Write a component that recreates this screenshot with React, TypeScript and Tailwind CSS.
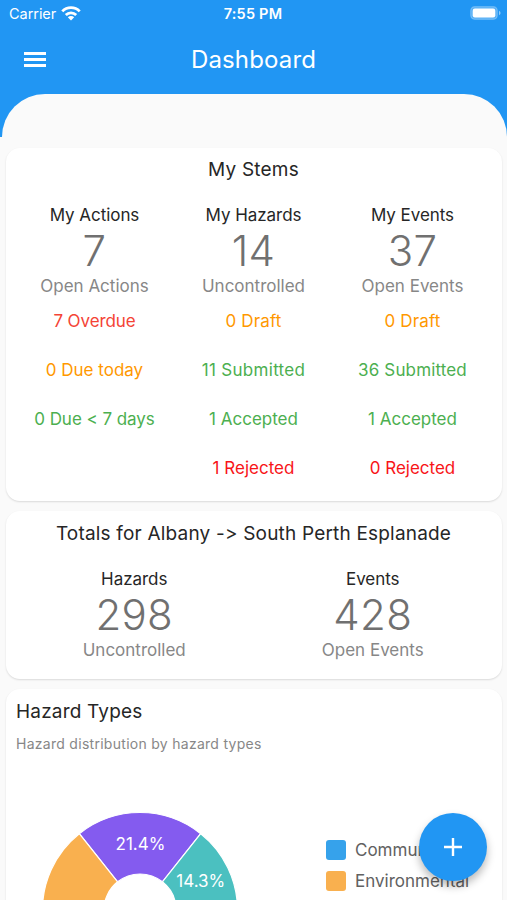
import type { ReactNode } from "react";
import clsx from "clsx";

type Line = { text: string; className: string };
type Stat = { title: string; value: number; caption: string; lines?: Line[] };

const stems: Stat[] = [
    {
        title: "My Actions",
        value: 7,
        caption: "Open Actions",
        lines: [
            { text: "7 Overdue", className: "text-[#f44336] tracking-[-0.1px]" },
            { text: "0 Due today", className: "text-[#ff9800]" },
            { text: "0 Due < 7 days", className: "text-[#4caf50] tracking-[-0.05px]" },
        ],
    },
    {
        title: "My Hazards",
        value: 14,
        caption: "Uncontrolled",
        lines: [
            { text: "0 Draft", className: "text-[#ff9800] tracking-[0.15px]" },
            { text: "11 Submitted", className: "text-[#4caf50] tracking-[0.3px]" },
            { text: "1 Accepted", className: "text-[#4caf50]" },
            { text: "1 Rejected", className: "text-[#f81418]" },
        ],
    },
    {
        title: "My Events",
        value: 37,
        caption: "Open Events",
        lines: [
            { text: "0 Draft", className: "text-[#ff9800] tracking-[0.15px]" },
            { text: "36 Submitted", className: "text-[#4caf50] tracking-[0.15px]" },
            { text: "1 Accepted", className: "text-[#4caf50]" },
            { text: "0 Rejected", className: "text-[#f81418]" },
        ],
    },
];

const totals: Stat[] = [
    { title: "Hazards", value: 298, caption: "Uncontrolled" },
    { title: "Events", value: 428, caption: "Open Events" },
];

const legend = [
    { label: "Community", color: "bg-[#36a2eb]" },
    { label: "Environmental", color: "bg-[#f9b04f]" },
];

// Angles are in degrees, clockwise from the top
const slices = [
    { from: -38.5, to: 38.5, color: "#845bef", label: "21.4%" },
    { from: 38.5, to: 90, color: "#4bc0c0", label: "14.3%" },
    { from: 90, to: 205, color: "#36a2eb" },
    { from: 205, to: 321.5, color: "#f9b04f" },
];

const OUTER = 97.5;
const INNER = 36;

function point(angle: number, radius: number) {
    const rad = (angle * Math.PI) / 180;
    return [100 + radius * Math.sin(rad), 100 - radius * Math.cos(rad)];
}

function slicePath(from: number, to: number) {
    const large = to - from > 180 ? 1 : 0;
    const [x1, y1] = point(from, OUTER);
    const [x2, y2] = point(to, OUTER);
    const [x3, y3] = point(to, INNER);
    const [x4, y4] = point(from, INNER);
    return `M${x1} ${y1} A${OUTER} ${OUTER} 0 ${large} 1 ${x2} ${y2} L${x3} ${y3} A${INNER} ${INNER} 0 ${large} 0 ${x4} ${y4} Z`;
}

function DonutChart() {
    return (
        <svg viewBox="0 0 200 200" className="h-[200px] w-[200px] shrink-0">
            {slices.map((slice) => (
                <path key={slice.from} d={slicePath(slice.from, slice.to)} fill={slice.color} stroke="#fff" strokeWidth="1.2" />
            ))}
            {slices.map((slice) => {
                if (!slice.label) return null;
                const [x, y] = point((slice.from + slice.to) / 2, 67);
                return (
                    <text key={slice.from} x={x + 0.5} y={y + 6.5} textAnchor="middle" fill="#fff" fontSize="17">
                        {slice.label}
                    </text>
                );
            })}
        </svg>
    );
}

function StatusBar() {
    return (
        <div className="grid h-[27px] grid-cols-3 items-center pl-[9px] pr-[6px] text-white">
            <div className="flex items-center gap-[5px]">
                <span className="text-[14.5px] tracking-[-0.05px]">Carrier</span>
                <svg viewBox="0 0 20 15" className="-mt-px h-[15px] w-[20px]" fill="none" stroke="#fff" strokeWidth="2.8">
                    <path d="M1.3 5.4a12 12 0 0 1 17.4 0" />
                    <path d="M4.8 9a7.4 7.4 0 0 1 10.4 0" />
                    <path d="M10 14.6 6.8 11.3a4.5 4.5 0 0 1 6.4 0Z" fill="#fff" stroke="none" />
                </svg>
            </div>
            <div className="pr-1 text-center text-[14.5px] font-semibold tracking-[0.2px]">7:55 PM</div>
            <svg viewBox="0 0 31 14" className="-mt-px h-[14px] w-[31px] justify-self-end">
                <rect x="0.7" y="0.7" width="26.6" height="12.6" rx="4" fill="#fff" fillOpacity="0.25" stroke="#fff" strokeOpacity="0.25" strokeWidth="1.2" />
                <rect x="2.7" y="2.6" width="22.6" height="8.8" rx="2.2" fill="#fff" />
                <path d="M29 4.8q1.6 1 1.6 2.2t-1.6 2.2Z" fill="#fff" fillOpacity="0.5" />
            </svg>
        </div>
    );
}

function StatColumn({ stat }: { stat: Stat }) {
    return (
        <div className="flex flex-1 flex-col items-center whitespace-nowrap text-[17px] leading-[21px]">
            <div className="tracking-[-0.05px] text-[#262626]">{stat.title}</div>
            <div className="h-[50px] text-[42px] font-[350] leading-[50px] tracking-[0.3px] text-[#707070]">{stat.value}</div>
            <div className="text-[#878787]">{stat.caption}</div>
            {stat.lines && (
                <div className="mt-[14px] flex flex-col items-center gap-7">
                    {stat.lines.map((line) => (
                        <div key={line.text} className={line.className}>
                            {line.text}
                        </div>
                    ))}
                </div>
            )}
        </div>
    );
}

function CardTitle({ className, children }: { className?: string; children: ReactNode }) {
    return <h2 className={clsx("text-[19px] leading-6 tracking-[0.19px] text-[#262626]", className)}>{children}</h2>;
}

function Card({ className, children }: { className?: string; children: ReactNode }) {
    return (
        <section className={clsx("rounded-[14px] bg-white pl-[9px] pr-[10px] shadow-[0_1px_2px_rgba(0,0,0,0.13)]", className)}>
            {children}
        </section>
    );
}

export default function App() {
    return (
        <div className="relative h-[900px] w-[507px] overflow-hidden bg-[#fafafa] font-['Inter',sans-serif]">
            <header className="flex h-[137px] flex-col bg-[#2196f3]">
                <StatusBar />
                <div className="grid h-[67px] grid-cols-[60px_1fr_60px] items-center text-white">
                    <button aria-label="Menu" className="-mt-[3px] flex flex-col gap-[3px] pl-6">
                        <span className="h-[3px] w-[22px] bg-white" />
                        <span className="h-[3px] w-[22px] bg-white" />
                        <span className="h-[3px] w-[22px] bg-white" />
                    </button>
                    <h1 className="-mt-0.5 text-center text-2xl tracking-[0.15px]">Dashboard</h1>
                </div>
                <div className="ml-[2px] h-[43px] rounded-t-[48px] bg-[#fafafa]" />
            </header>

            <main className="flex flex-col gap-[10px] pl-[6px] pr-[5px] pt-[11px]">
                <Card className="h-[353px] pt-[10px]">
                    <CardTitle className="text-center">My Stems</CardTitle>
                    <div className="mt-[23px] flex">
                        {stems.map((stat) => (
                            <StatColumn key={stat.title} stat={stat} />
                        ))}
                    </div>
                </Card>

                <Card className="h-[168px] pt-[11px]">
                    <CardTitle className="text-center">Totals for Albany -&gt; South Perth Esplanade</CardTitle>
                    <div className="mt-[23px] flex">
                        {totals.map((stat) => (
                            <StatColumn key={stat.title} stat={stat} />
                        ))}
                    </div>
                </Card>

                <Card className="h-[400px] pt-[11px]">
                    <CardTitle className="pl-px tracking-[0.05px]">Hazard Types</CardTitle>
                    <p className="mt-[10px] pl-px text-[14px] leading-5 tracking-[0.28px] text-[#878787]">
                        Hazard distribution by hazard types
                    </p>
                    <div className="mt-[56px] flex pl-[25px]">
                        <DonutChart />
                        <ul className="ml-[86px] mt-[30px] flex flex-col gap-[11px]">
                            {legend.map((item) => (
                                <li key={item.label} className="flex h-5 items-center gap-[9px] text-[17px] text-[#616161]">
                                    <span className={clsx("h-5 w-5 rounded-[3px]", item.color)} />
                                    <span className="pt-0.5">{item.label}</span>
                                </li>
                            ))}
                        </ul>
                    </div>
                </Card>
            </main>

            {/* Floating action button */}
            <button
                aria-label="Add"
                className="absolute bottom-[19px] right-5 flex h-[68px] w-[68px] items-center justify-center rounded-full bg-[#2196f3] shadow-[0_5px_9px_rgba(0,0,0,0.28)]"
            >
                <svg viewBox="0 0 18 18" className="h-[18px] w-[18px]" stroke="#fff" strokeWidth="2.4">
                    <path d="M9 0v18M0 9h18" />
                </svg>
            </button>
        </div>
    );
}
